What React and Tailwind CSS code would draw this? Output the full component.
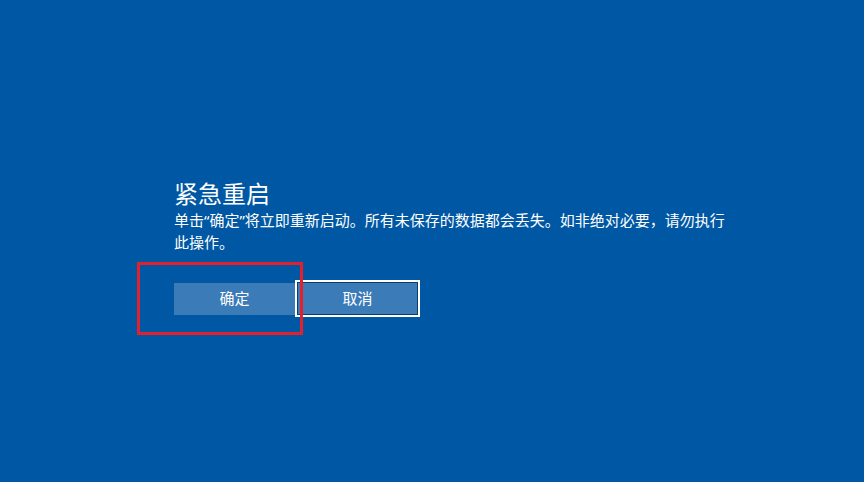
import React from "react";

export default function App() {
  const font = { fontFamily: '"Noto Sans CJK SC", "Noto Sans", sans-serif' };
  const q = "font-['Noto_Sans',sans-serif]";
  return (
    <div
      className="relative w-[864px] h-[482px] overflow-hidden bg-[#0058a4] text-white"
      style={font}
    >
      <div className="flex flex-col pl-[174px] pt-[177px]">
        <h1 className="text-[24px] leading-[32px] font-normal">紧急重启</h1>
        <p className="w-[560px] text-[15px] leading-[22px]">
          单击<span className={q}>“</span>确定<span className={q}>”</span>将立即重新启动。所有未保存的数据都会丢失。如非绝对必要，请勿执行此操作。
        </p>
        <div className="mt-[27px] flex items-center">
          <button className="w-[121px] h-[32px] bg-[#3b7cb8] text-[15px] text-white">
            确定
          </button>
          <button className="w-[125px] h-[37px] border-2 border-white bg-[#3b7cb8] text-[15px] text-white shadow-[inset_0_0_0_1px_#0a3d6e]">
            取消
          </button>
        </div>
      </div>
      <div className="absolute left-[137px] top-[262px] w-[166px] h-[73px] border-[3px] border-[#e3202c]" />
    </div>
  );
}
